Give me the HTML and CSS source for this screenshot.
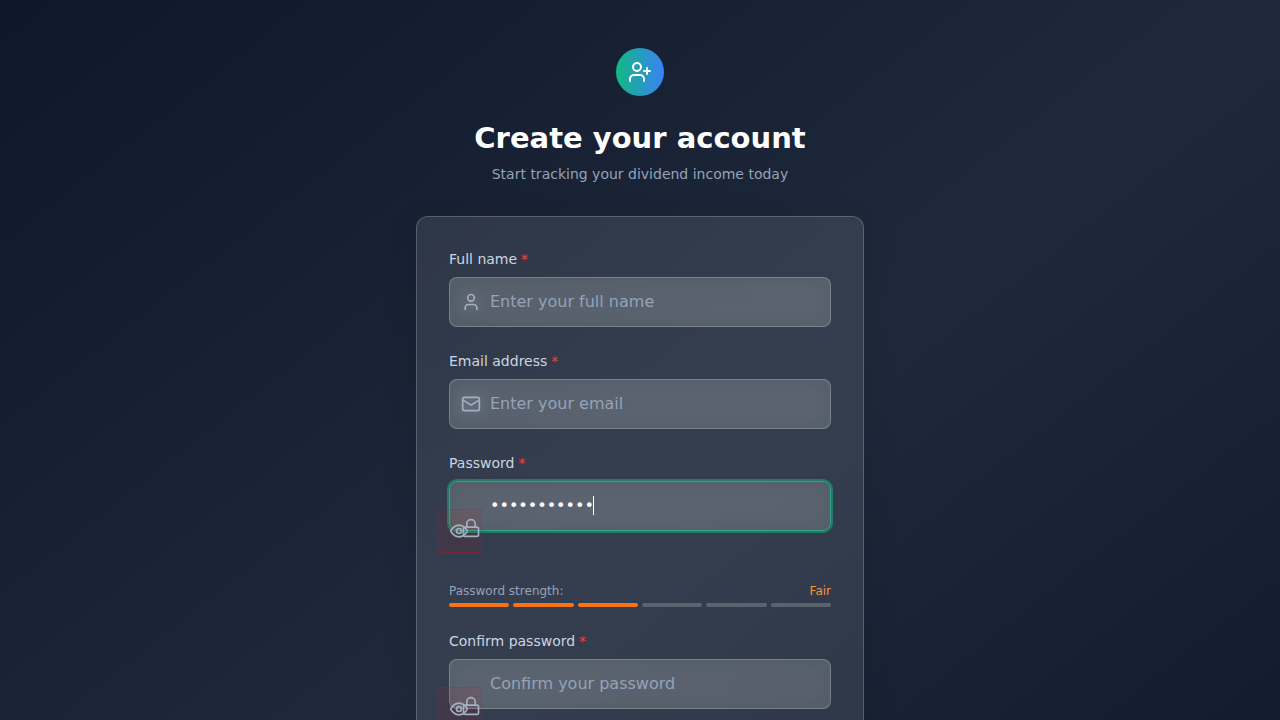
FILE: index.html
```html
<!DOCTYPE html>
<html lang="en">
<head>
  <meta charset="utf-8">
  <meta name="viewport" content="width=device-width, initial-scale=1">
  <title>Create your account</title>
  <link rel="stylesheet" href="styles.css">
</head>
<body>
  <div class="backdrop">
  <main class="page">
    <header class="intro">
      <div class="badge">
        <svg class="badge-icon" viewBox="0 0 24 24" aria-hidden="true"><path d="M16 21v-2a4 4 0 0 0-4-4H6a4 4 0 0 0-4 4v2"/><circle cx="9" cy="7" r="4"/><path d="M19 8v6M22 11h-6"/></svg>
      </div>
      <h1 class="title">Create your account</h1>
      <p class="subtitle">Start tracking your dividend income today</p>
    </header>

    <form class="card">
      <div class="field">
        <label class="label" for="name">Full name<span class="required">*</span></label>
        <div class="control">
          <input class="input" id="name" type="text" placeholder="Enter your full name">
          <svg class="icon icon-lead" viewBox="0 0 24 24" aria-hidden="true"><path d="M19 21v-2a4 4 0 0 0-4-4H9a4 4 0 0 0-4 4v2"/><circle cx="12" cy="7" r="4"/></svg>
        </div>
      </div>

      <div class="field">
        <label class="label" for="email">Email address<span class="required">*</span></label>
        <div class="control">
          <input class="input" id="email" type="email" placeholder="Enter your email">
          <svg class="icon icon-lead" viewBox="0 0 24 24" aria-hidden="true"><rect x="2" y="4" width="20" height="16" rx="2"/><path d="m22 7-8.97 5.7a1.94 1.94 0 0 1-2.06 0L2 7"/></svg>
        </div>
      </div>

      <div class="field">
        <label class="label" for="password">Password<span class="required">*</span></label>
        <div class="control control-secret">
          <input class="input input-active" id="password" type="password" value="dividends12">
          <span class="caret"></span>
          <button class="reveal" type="button" aria-label="Show password">
            <svg class="icon" viewBox="0 0 24 24" aria-hidden="true"><path d="M2 12s3-7 10-7 10 7 10 7-3 7-10 7-10-7-10-7Z"/><circle cx="12" cy="12" r="3"/></svg>
          </button>
          <svg class="icon icon-lock" viewBox="0 0 24 24" aria-hidden="true"><rect x="3" y="11" width="18" height="11" rx="2"/><path d="M7 11V7a5 5 0 0 1 10 0v4"/></svg>
        </div>
        <div class="strength">
          <div class="strength-row"><span>Password strength:</span><span class="strength-value">Fair</span></div>
          <div class="bars"><span class="bar bar-on"></span><span class="bar bar-on"></span><span class="bar bar-on"></span><span class="bar"></span><span class="bar"></span><span class="bar"></span></div>
        </div>
      </div>

      <div class="field">
        <label class="label" for="confirm">Confirm password<span class="required">*</span></label>
        <div class="control control-secret">
          <input class="input" id="confirm" type="password" placeholder="Confirm your password">
          <button class="reveal" type="button" aria-label="Show confirmed password">
            <svg class="icon" viewBox="0 0 24 24" aria-hidden="true"><path d="M2 12s3-7 10-7 10 7 10 7-3 7-10 7-10-7-10-7Z"/><circle cx="12" cy="12" r="3"/></svg>
          </button>
          <svg class="icon icon-lock" viewBox="0 0 24 24" aria-hidden="true"><rect x="3" y="11" width="18" height="11" rx="2"/><path d="M7 11V7a5 5 0 0 1 10 0v4"/></svg>
        </div>
      </div>
    </form>
  </main>
  </div>
</body>
</html>
```

FILE: styles.css
```css
*, *::before, *::after {
  box-sizing: border-box;
}

body {
  margin: 0;
  background: #0f172a;
  font-family: "DejaVu Sans", sans-serif;
  font-size: 14px;
  line-height: 20px;
  color: #cbd5e1;
}

.backdrop {
  display: flex;
  justify-content: center;
  min-height: 140vh;
  background: linear-gradient(to bottom right, #0f172a, #1e293b, #0f172a);
}

.page {
  display: flex;
  flex-direction: column;
  width: 100%;
  max-width: 480px;
  padding: 48px 16px;
}

.intro {
  display: flex;
  flex-direction: column;
  align-items: center;
  margin-bottom: 32px;
  text-align: center;
}

.badge {
  display: grid;
  place-items: center;
  width: 48px;
  height: 48px;
  border-radius: 50%;
  background: linear-gradient(to right, #10b981, #3b82f6);
}

.badge-icon {
  width: 24px;
  height: 24px;
  fill: none;
  stroke: #fff;
  stroke-width: 2;
  stroke-linecap: round;
  stroke-linejoin: round;
}

.title {
  margin: 24px 0 8px;
  font-size: 29px;
  line-height: 36px;
  font-weight: 700;
  color: #fff;
}

.subtitle {
  margin: 0;
  color: #94a3b8;
}

.card {
  display: flex;
  flex: 1;
  flex-direction: column;
  gap: 24px;
  padding: 32px;
  border: 1px solid rgba(255, 255, 255, 0.2);
  border-radius: 12px;
  background: rgba(255, 255, 255, 0.1);
  box-shadow: 0 8px 32px rgba(0, 0, 0, 0.1);
}

.label {
  display: block;
  margin-bottom: 8px;
}

.required {
  margin-left: 4px;
  color: #ef4444;
}

.control {
  position: relative;
}

.control-secret {
  margin-bottom: 52px;
}

.input {
  display: block;
  width: 100%;
  height: 50px;
  padding: 0 40px 2px;
  border: 1px solid rgba(255, 255, 255, 0.2);
  border-radius: 8px;
  outline: none;
  background: rgba(255, 255, 255, 0.2);
  box-shadow: inset 0 0 20px rgba(71, 91, 99, 0.6);
  font: inherit;
  font-size: 16px;
  color: #fff;
}

.input::placeholder {
  color: #94a3b8;
  opacity: 1;
}

.input-active {
  border-color: #34a386;
  box-shadow: 0 0 0 2px rgba(16, 185, 129, 0.5), inset 0 0 20px rgba(71, 91, 99, 0.6);
}

.caret {
  position: absolute;
  top: 15px;
  left: 144px;
  width: 1px;
  height: 19px;
  background: #fff;
}

.icon {
  display: block;
  width: 20px;
  height: 20px;
  fill: none;
  stroke: #a3afc2;
  stroke-width: 2;
  stroke-linecap: round;
  stroke-linejoin: round;
}

.icon-lead {
  position: absolute;
  top: 15px;
  left: 12px;
  filter: drop-shadow(0 0 8px rgba(148, 163, 184, 0.8));
}

.icon-lock {
  position: absolute;
  top: 37px;
  left: 12px;
}

.reveal {
  position: absolute;
  top: 28px;
  left: -12px;
  display: grid;
  place-items: center;
  width: 45px;
  height: 44px;
  padding: 0 1px 0 0;
  border: 1px solid rgba(255, 0, 0, 0.25);
  background: rgba(255, 0, 0, 0.07);
}

.strength {
  font-size: 12px;
  line-height: 16px;
  color: #94a3b8;
}

.strength-row {
  display: flex;
  justify-content: space-between;
  margin-bottom: 4px;
}

.strength-value {
  color: #fb923c;
}

.bars {
  display: flex;
  gap: 4px;
}

.bar {
  flex: 1;
  height: 4px;
  border-radius: 2px;
  background: rgba(255, 255, 255, 0.2);
}

.bar-on {
  background: #f97316;
}
```
